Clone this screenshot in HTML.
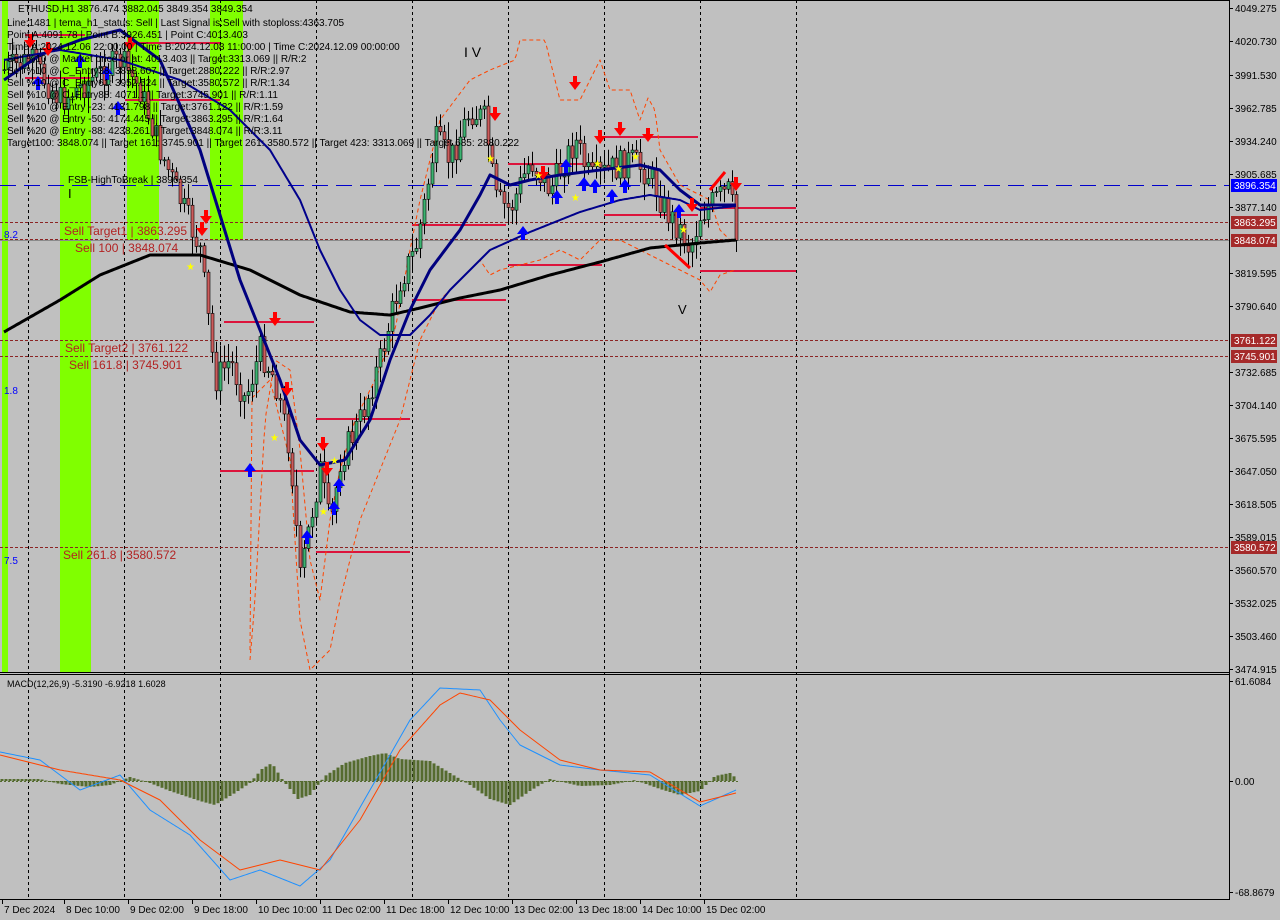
<!DOCTYPE html>
<html><head><meta charset="utf-8">
<style>
html,body{margin:0;padding:0;background:#c0c0c0;}
body{width:1280px;height:920px;overflow:hidden;position:relative;font-family:"Liberation Sans",Tahoma,sans-serif;}
svg{position:absolute;left:0;top:0;}
svg text{font-family:"Liberation Sans",sans-serif;}
</style></head>
<body>
<svg id="c" width="1280" height="920" viewBox="0 0 1280 920" xmlns="http://www.w3.org/2000/svg">
<rect x="0" y="0" width="1280" height="920" fill="#c0c0c0"/>
<g id="bands"></g>
<g id="grid"></g>
<g id="hl"></g>
<g id="env"></g>
<g id="candles"></g>
<g id="lines"></g>
<g id="marks"></g>
<g id="macd"></g>
<g id="txt" font-size="10" fill="#000"></g>
<g id="axis" font-size="10"></g>
</svg>
<script>
var NS="http://www.w3.org/2000/svg";
function el(g,t,a,txt){var e=document.createElementNS(NS,t);for(var k in a)e.setAttribute(k,a[k]);if(txt!==undefined)e.textContent=txt;document.getElementById(g).appendChild(e);return e;}
function interp(pts,x){if(x<=pts[0][0])return pts[0][1];for(var i=1;i<pts.length;i++){if(x<=pts[i][0]){var a=pts[i-1],b=pts[i];return a[1]+(b[1]-a[1])*(x-a[0])/(b[0]-a[0]);}}return pts[pts.length-1][1];}
function pl(g,pts,stroke,w,dash){var d=[];for(var x=pts[0][0];x<=pts[pts.length-1][0];x+=2)d.push(x+","+interp(pts,x).toFixed(1));el(g,"polyline",{points:d.join(" "),fill:"none",stroke:stroke,"stroke-width":w,"stroke-dasharray":dash||"","stroke-linejoin":"round"});}
[[2,8,0,672],[48,60,0,30],[60,91,0,672],[127,159,0,240],[210,243,0,240]].forEach(function(b){el("bands","rect",{x:b[0],y:b[2],width:b[1]-b[0],height:b[3]-b[2],fill:"#80ff00"});});
[28,124,220,316,412,508,604,700,796].forEach(function(x){el("grid","line",{x1:x+.5,y1:0,x2:x+.5,y2:899,stroke:"#000","stroke-dasharray":"3,3","stroke-width":1});});
el("hl","line",{x1:0,y1:185.5,x2:1229,y2:185.5,stroke:"#0000cc","stroke-dasharray":"16,8"});
[[222,"#8b2323"],[340,"#8b2323"],[356,"#8b2323"],[547,"#8b2323"]].forEach(function(l){el("hl","line",{x1:0,y1:l[0]+.5,x2:1229,y2:l[0]+.5,stroke:l[1],"stroke-dasharray":"3,2"});});
el("hl","line",{x1:0,y1:240.5,x2:1229,y2:240.5,stroke:"#8b8b8b"});
el("hl","line",{x1:0,y1:239.5,x2:1229,y2:239.5,stroke:"#8b2323","stroke-dasharray":"3,2"});
[[224,314,322],[220,314,471],[316,410,419],[316,410,552],[412,506,300],[412,506,225],[508,602,164],[508,602,265],[604,698,137],[604,698,215],[700,796,208],[700,796,271],[25,85,35],[25,90,78],[125,220,43],[125,220,100]].forEach(function(s){el("hl","line",{x1:s[0],y1:s[2],x2:s[1],y2:s[2],stroke:"#dc143c","stroke-width":2});});
var envU=[[250,660],[255,600],[265,420],[275,360],[290,370],[300,450],[310,560],[320,600],[330,520],[340,470],[355,420],[375,380],[395,330],[410,250],[420,200],[440,120],[470,80],[490,70],[515,60],[520,40],[545,40],[555,80],[560,100],[580,100],[600,60],[610,90],[630,90],[640,120],[648,98],[655,110],[660,150],[680,185],[700,195],[710,200],[720,230],[730,240]];
var envL=[[250,650],[250,560],[240,500],[230,480],[240,420],[250,400],[270,380],[290,460],[300,620],[310,670],[320,660],[330,650],[340,600],[360,520],[380,470],[400,420],[410,380],[420,340],[440,300],[460,280],[480,260],[490,275],[500,270],[520,265],[540,260],[560,250],[580,260],[600,240],[620,240],[640,250],[660,260],[680,270],[700,280],[710,292],[720,275],[735,270]];
pl("env",envU,"#ff4500",1,"4,3");pl("env",envL,"#ff4500",1,"4,3");
var pricePts=[[4,70],[30,60],[60,100],[90,80],[120,60],[140,90],[160,150],[180,200],[200,250],[215,380],[230,360],[245,400],[260,350],[275,380],[290,450],[300,580],[310,520],[320,470],[330,530],[340,460],[360,420],[380,360],[400,280],[415,250],[425,200],[435,140],[450,160],[470,110],[485,120],[495,200],[510,210],[530,160],[550,190],[575,140],[590,180],[610,170],[630,160],[650,175],[665,210],[680,230],[690,250],[700,215],[715,200],[730,190],[736,240]];
var seed=7;function rnd(){seed=(seed*9301+49297)%233280;return seed/233280;}
var prev=interp(pricePts,2);
for(var x=4;x<=736;x+=4){var c=interp(pricePts,x)+(rnd()-.5)*30;var o=prev;var hi=Math.min(o,c)-rnd()*16-2,lo=Math.max(o,c)+rnd()*16+2;
el("candles","line",{x1:x+.5,y1:hi,x2:x+.5,y2:lo,stroke:"#000"});
var up=c<o;el("candles","rect",{x:x-1,y:Math.min(o,c),width:3,height:Math.max(1,Math.abs(c-o)),fill:up?"#3cb371":"#cd5c5c",stroke:"#000","stroke-width":.6});prev=c;}
pl("lines",[[4,332],[60,300],[100,275],[150,255],[200,255],[250,270],[300,295],[350,312],[390,315],[420,308],[460,298],[500,290],[550,275],[600,262],[650,248],[700,243],[736,240]],"#000",3);
pl("lines",[[4,60],[60,50],[120,60],[180,80],[230,110],[270,150],[300,200],[320,250],[340,290],[360,320],[380,335],[410,335],[430,315],[450,290],[490,250],[530,232],[580,212],[620,200],[650,195],[680,200],[700,210],[736,206]],"#00008b",2);
pl("lines",[[4,80],[40,55],[80,40],[120,30],[160,60],[200,150],[240,280],[260,330],[280,380],[300,440],[320,465],[345,460],[370,420],[390,360],[410,310],[430,270],[460,230],[480,195],[490,175],[510,185],[530,180],[560,175],[600,170],[640,165],[660,170],[680,190],[700,205],[736,205]],"#00007f",3);
el("lines","line",{x1:710,y1:190,x2:725,y2:172,stroke:"#ff0000","stroke-width":3});
el("lines","line",{x1:665,y1:245,x2:690,y2:268,stroke:"#ff0000","stroke-width":3});
function dn(x,y){el("marks","path",{d:"M"+(x-2)+" "+(y-8)+"h4v6h4l-6 8l-6-8h4z",fill:"#ff0000"});}
function upA(x,y){el("marks","path",{d:"M"+(x-2)+" "+(y+8)+"h4v-6h4l-6-8l-6 8h4z",fill:"#0000ff"});}
function star(x,y){el("marks","text",{x:x-4,y:y+4,fill:"#ffff00","font-size":"10"},"★");}
[[575,84],[495,115],[620,130],[600,138],[648,136],[543,174],[736,185],[692,206],[206,218],[202,230],[275,320],[287,390],[323,445],[327,470],[30,42],[48,50],[130,45]].forEach(function(a){dn(a[0],a[1]);});
[[523,232],[566,165],[584,183],[595,185],[612,195],[625,185],[557,196],[679,210],[339,484],[334,507],[307,536],[250,469],[80,60],[107,72],[118,107],[38,82]].forEach(function(a){upA(a[0],a[1]);});
[[490,158],[538,175],[575,197],[597,163],[618,168],[635,156],[683,229],[190,266],[274,437],[323,511],[334,460]].forEach(function(a){star(a[0],a[1]);});
el("macd","line",{x1:0,y1:781.5,x2:740,y2:781.5,stroke:"#556b2f","stroke-dasharray":"2,2"});
var hist=[[0,-2],[40,-2],[60,3],[90,6],[110,4],[130,-4],[150,2],[170,10],[200,20],[215,24],[235,12],[250,2],[262,-12],[272,-18],[282,-2],[298,18],[310,14],[325,-5],[345,-18],[370,-25],[385,-28],[400,-22],[430,-20],[455,-5],[470,4],[490,18],[510,24],[530,10],[550,-2],[580,5],[610,4],[635,-1],[660,8],[680,14],[700,10],[715,-5],[730,-8],[736,-3]];
for(var x=2;x<=736;x+=4){var v=interp(hist,x);el("macd","rect",{x:x-1.5,y:v<0?781+v:781,width:3,height:Math.max(1,Math.abs(v)),fill:"#556b2f"});}
pl("macd",[[0,752],[40,760],[80,790],[120,775],[150,810],[190,835],[230,880],[260,870],[300,886],[330,860],[370,790],[410,720],[440,688],[480,690],[500,720],[520,745],[560,765],[600,770],[650,775],[700,806],[736,790]],"#1e90ff",1);
pl("macd",[[0,755],[60,770],[120,780],[160,800],[200,840],[240,870],[280,860],[320,870],[360,820],[400,750],[440,705],[460,693],[490,700],[520,730],[560,760],[600,770],[650,772],[700,802],[736,793]],"#ff4500",1);
el("axis","line",{x1:0,y1:672.5,x2:1229,y2:672.5,stroke:"#000"});
el("axis","line",{x1:0,y1:674.5,x2:1229,y2:674.5,stroke:"#000"});
el("axis","line",{x1:0,y1:899.5,x2:1229,y2:899.5,stroke:"#000"});
el("axis","line",{x1:1229.5,y1:0,x2:1229.5,y2:900,stroke:"#000"});
el("axis","line",{x1:0,y1:0.5,x2:1229,y2:0.5,stroke:"#000"});
var lab=[["4049.275",8],["4020.730",41],["3991.530",75],["3962.785",108],["3934.240",141],["3905.685",174],["3877.140",207],["3819.595",273],["3790.640",306],["3732.685",372],["3704.140",405],["3675.595",438],["3647.050",471],["3618.505",504],["3589.015",537],["3560.570",570],["3532.025",603],["3503.460",636],["3474.915",669],["61.6084",681],["0.00",781],["-68.8679",892]];
lab.forEach(function(l){el("axis","line",{x1:1229,y1:l[1]+.5,x2:1233,y2:l[1]+.5,stroke:"#000"});el("axis","text",{x:1235,y:l[1]+4,fill:"#000"},l[0]);});
[["3896.354",185,"#0000ff"],["3863.295",222,"#a52a2a"],["3848.074",240,"#a52a2a"],["3761.122",340,"#a52a2a"],["3745.901",356,"#a52a2a"],["3580.572",547,"#a52a2a"]].forEach(function(l){el("axis","rect",{x:1231,y:l[1]-6,width:46,height:13,fill:l[2]});el("axis","text",{x:1234,y:l[1]+4,fill:"#fff"},l[0]);});
[["7 Dec 2024",4],["8 Dec 10:00",66],["9 Dec 02:00",130],["9 Dec 18:00",194],["10 Dec 10:00",258],["11 Dec 02:00",322],["11 Dec 18:00",386],["12 Dec 10:00",450],["13 Dec 02:00",514],["13 Dec 18:00",578],["14 Dec 10:00",642],["15 Dec 02:00",706]].forEach(function(d){el("axis","line",{x1:d[1]-1.5,y1:899,x2:d[1]-1.5,y2:904,stroke:"#000"});el("axis","text",{x:d[1],y:913,fill:"#000"},d[0]);});
var tl=[["ETHUSD,H1  3876.474 3882.045 3849.354 3849.354",18,12],["Line:1481 | tema_h1_status: Sell | Last Signal is:Sell with stoploss:4363.705",7,26],["Point A:4091.78 | Point B:3926.451 | Point C:4013.403",7,38],["Time A:2024.12.06 22:00:00 | Time B:2024.12.08 11:00:00 | Time C:2024.12.09 00:00:00",7,50],["Sell %10 @ Market price or at: 4013.403 || Target:3313.069 || R/R:2",7,62],["Sell %10 @ C_Entry38: 3898.607 || Target:2880.222 || R/R:2.97",7,74],["Sell %10 @ C_Entry61: 3952.524 || Target:3580.572 || R/R:1.34",7,86],["Sell %10 @ C_Entry88: 4071.1 || Target:3745.901 || R/R:1.11",7,98],["Sell %10 @ Entry -23: 4131.798 || Target:3761.122 || R/R:1.59",7,110],["Sell %20 @ Entry -50: 4174.445 || Target:3863.295 || R/R:1.64",7,122],["Sell %20 @ Entry -88: 4238.261 || Target:3848.074 || R/R:3.11",7,134],["Target100: 3848.074 || Target 161: 3745.901 || Target 261: 3580.572 || Target 423: 3313.069 || Target 685: 2880.222",7,146],["FSB-HighToBreak | 3896.354",68,183]];
tl.forEach(function(t){el("txt","text",{x:t[1],y:t[2]},t[0]);});
el("txt","text",{x:464,y:57,"font-size":"14"},"I V");
el("txt","text",{x:678,y:314,"font-size":"13"},"V");
el("txt","text",{x:68,y:198,"font-size":"13"},"I");
[["Sell Target1 | 3863.295",64,235],["Sell 100 | 3848.074",75,252],["Sell Target2 | 3761.122",65,352],["Sell 161.8 | 3745.901",69,369],["Sell  261.8 | 3580.572",63,559]].forEach(function(t){el("txt","text",{x:t[1],y:t[2],"font-size":"12",fill:"#b22222"},t[0]);});
[["8.2",4,238],["1.8",4,394],["7.5",4,564]].forEach(function(t){el("txt","text",{x:t[1],y:t[2],fill:"#0000ff"},t[0]);});
el("txt","text",{x:7,y:687,"font-size":"9"},"MACD(12,26,9) -5.3190 -6.9218 1.6028");
</script>
</body></html>
